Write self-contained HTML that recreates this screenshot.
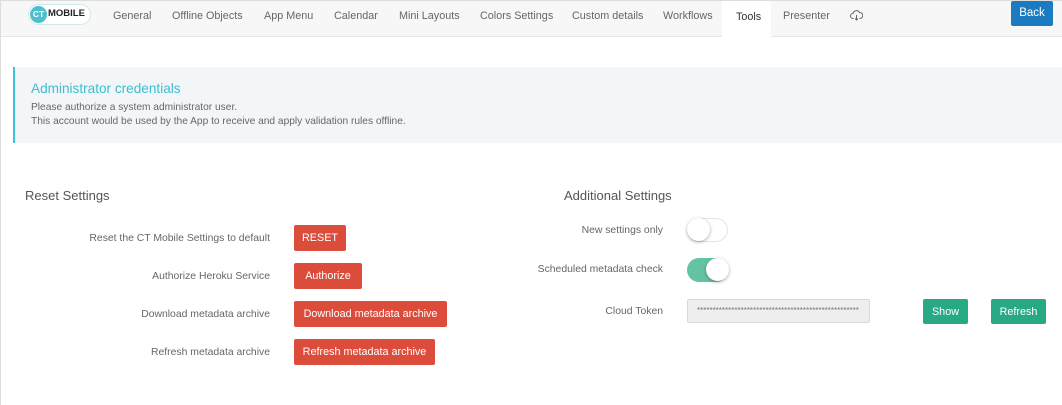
<!DOCTYPE html><html><head><style>
*{box-sizing:border-box;margin:0;padding:0}
body{width:1062px;height:405px;background:#fff;font-family:"Liberation Sans",sans-serif;position:relative;overflow:hidden;border-left:1px solid #ddd}
.a{position:absolute;white-space:nowrap}
.nav{position:absolute;left:0;top:0;width:1062px;height:37px;background:#f7f7f7;border-bottom:1px solid #e6e6e6;border-top:1px solid #ddd}
.tab{position:absolute;top:10px;font-size:10.8px;color:#666}
.btn{position:absolute;color:#fff;font-size:10.8px;text-align:center;border-radius:2px}
.r{background:#dc4c3b;height:26px;line-height:27px;left:293px}
.g{background:#27a985;height:25px;line-height:26px;top:299px}
.lbl{position:absolute;font-size:10.4px;color:#666;text-align:right}
</style></head><body>
<div class="nav"></div>
<div class="a" style="left:27px;top:4px;width:63px;height:21px;border-radius:11px;background:#fff;border:1px solid #cfe9ec"></div>
<div class="a" style="left:29px;top:6px;width:17px;height:17px;border-radius:50%;background:#4cc0cc;color:#fff;font-size:8.5px;font-weight:bold;line-height:17px;text-align:center">CT</div>
<div class="a" style="left:47px;top:8px;font-size:9.5px;font-weight:bold;color:#222">MOBILE</div>
<div class="tab" style="left:112px">General</div>
<div class="tab" style="left:171px">Offline Objects</div>
<div class="tab" style="left:263px">App Menu</div>
<div class="tab" style="left:333px">Calendar</div>
<div class="tab" style="left:398px">Mini Layouts</div>
<div class="tab" style="left:479px">Colors Settings</div>
<div class="tab" style="left:571px">Custom details</div>
<div class="tab" style="left:662px">Workflows</div>
<div class="a" style="left:721px;top:1px;width:49px;height:37px;background:#fff"></div>
<div class="tab" style="left:735px;top:11px;color:#333">Tools</div>
<div class="tab" style="left:782px">Presenter</div>
<svg class="a" style="left:849px;top:10px" width="13" height="11" viewBox="0 0 13 11"><path d="M3.5 8.5H3a2.5 2.5 0 0 1 0-5 3.5 3.5 0 0 1 6.5-1A2.5 2.5 0 0 1 10 8.5h-.5M6.5 5v5M5 8.5l1.5 1.5 1.5-1.5" fill="none" stroke="#666" stroke-width="1"/></svg>
<div class="btn" style="left:1010px;top:1px;width:42px;height:25px;line-height:25px;background:#1c7bc0;font-size:11.5px">Back</div>
<div class="a" style="left:12px;top:67px;width:1050px;height:76px;background:#f3f6f9;border-left:2px solid #3bc4d3"></div>
<div class="a" style="left:30px;top:81px;font-size:13.6px;color:#3bbdd0">Administrator credentials</div>
<div class="a" style="left:30px;top:101px;font-size:10.2px;color:#666;line-height:14px">Please authorize a system administrator user.<br>This account would be used by the App to receive and apply validation rules offline.</div>
<div class="a" style="left:24px;top:188px;font-size:13px;color:#555">Reset Settings</div>
<div class="a" style="left:563px;top:188px;font-size:13px;color:#555">Additional Settings</div>
<div class="lbl" style="right:792px;top:233px">Reset the CT Mobile Settings to default</div>
<div class="lbl" style="right:792px;top:271px">Authorize Heroku Service</div>
<div class="lbl" style="right:792px;top:309px">Download metadata archive</div>
<div class="lbl" style="right:792px;top:347px">Refresh metadata archive</div>
<div class="btn r" style="top:225px;width:52px">RESET</div>
<div class="btn r" style="top:263px;width:68px">Authorize</div>
<div class="btn r" style="top:301px;width:153px">Download metadata archive</div>
<div class="btn r" style="top:339px;width:141px">Refresh metadata archive</div>
<div class="lbl" style="right:399px;top:225px">New settings only</div>
<div class="lbl" style="right:399px;top:264px">Scheduled metadata check</div>
<div class="lbl" style="right:399px;top:306px">Cloud Token</div>
<div class="a" style="left:686px;top:218px;width:41px;height:24px;border-radius:12px;background:#fff;border:1px solid #e3e3e3"></div>
<div class="a" style="left:686px;top:218px;width:23px;height:23px;border-radius:50%;background:#fff;box-shadow:0 1px 3px rgba(0,0,0,.35)"></div>
<div class="a" style="left:686px;top:258px;width:41px;height:24px;border-radius:12px;background:#64c3a3"></div>
<div class="a" style="left:705px;top:258px;width:23px;height:23px;border-radius:50%;background:#fff;box-shadow:0 1px 3px rgba(0,0,0,.35)"></div>
<div class="a" style="left:686px;top:299px;width:183px;height:24px;background:#eee;border:1px solid #d8d8d8;border-radius:2px;font-size:8px;color:#777;line-height:22px;padding-left:9px;overflow:hidden">****************************************************</div>
<div class="btn g" style="left:922px;width:45px">Show</div>
<div class="btn g" style="left:990px;width:55px">Refresh</div>
</body></html>
